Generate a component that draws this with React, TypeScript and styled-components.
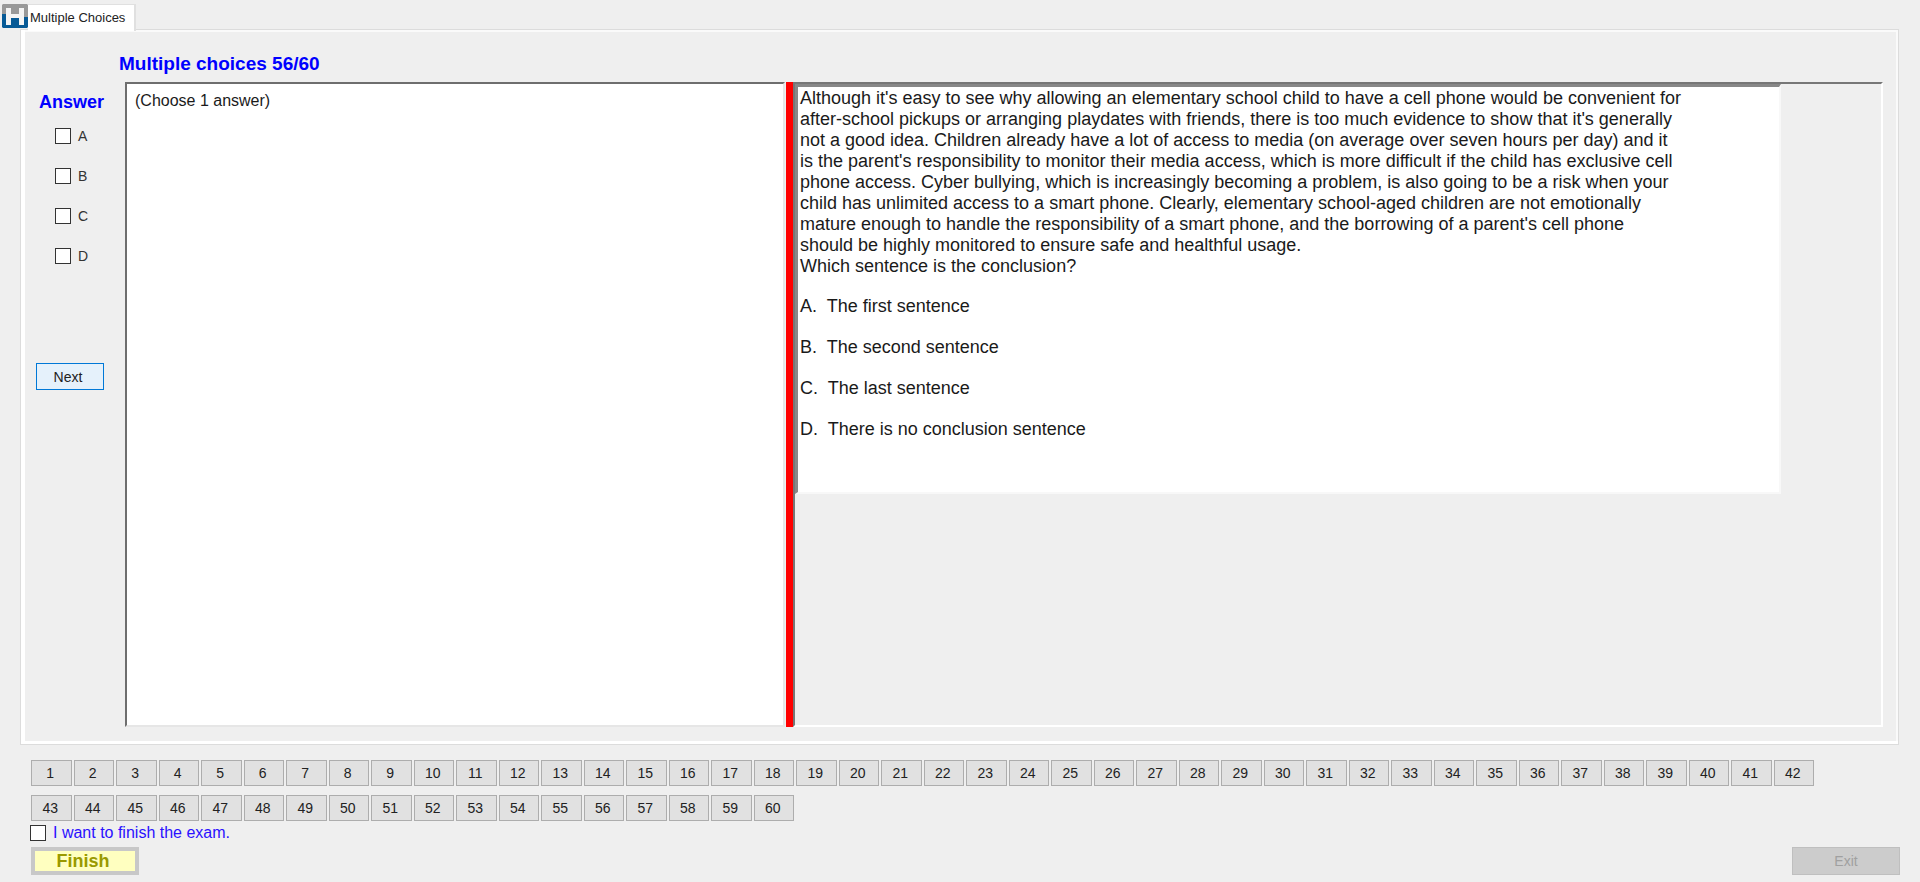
import React, { useState } from "react";
import styled, { createGlobalStyle } from "styled-components";

const GlobalStyle = createGlobalStyle`
  * { box-sizing: border-box; }
  body {
    margin: 0;
    background: #efefef;
    color: #1a1a1a;
    font-family: "Liberation Sans", Arial, sans-serif;
    font-size: 14px;
  }
  button { font-family: inherit; padding: 0; cursor: pointer; }
`;

const Page = styled.div`
  display: flex;
  flex-direction: column;
  min-height: 100vh;
`;

const Header = styled.header`
  display: flex;
  align-items: flex-start;
  padding: 4px 0 0 2px;
`;

const Logo = styled.svg`
  display: block;
  width: 26px;
  height: 24px;
`;

const Tab = styled.button`
  position: relative;
  height: 27px;
  margin-bottom: -2px;
  padding: 0 9px 1px 2px;
  border: 2px solid #e0e0e0;
  border-width: 1px 2px 0 0;
  background: #fff;
  color: #222;
  font-size: 13px;
`;

const TabPanel = styled.main`
  flex: 1;
  display: grid;
  grid-template-columns: 100px minmax(0, 1fr);
  grid-template-rows: 52px minmax(0, 1fr);
  margin: 0 21px 0 20px;
  padding: 0 15px 17px 4px;
  border: 1px solid #dcdcdc;
  box-shadow: inset 4px -3px 0 #fff, inset -2px 2px 0 #fafafa;
`;

const Title = styled.h1`
  grid-column: 2;
  margin: 0;
  padding-top: 22px;
  margin-left: -6px;
  color: #0000ff;
  font-size: 19px;
  line-height: 24px;
`;

const AnswerColumn = styled.form`
  display: flex;
  flex-direction: column;
  align-items: flex-start;
  padding: 10px 0 0 11px;
`;

const AnswerTitle = styled.h2`
  margin: 0 0 14px 3px;
  color: #0000ff;
  font-size: 18px;
  line-height: 20px;
`;

const Choices = styled.div`
  display: flex;
  flex-direction: column;
  gap: 20px;
  padding-left: 19px;
`;

const CheckLabel = styled.label<{ $accent?: boolean }>`
  display: flex;
  align-items: center;
  gap: 7px;
  height: 20px;
  color: ${(p) => (p.$accent ? "#2a10ff" : "#333")};
  font-size: ${(p) => (p.$accent ? 16 : 14)}px;
`;

const Checkbox = styled.input`
  appearance: none;
  width: 16px;
  height: 16px;
  margin: 0;
  border: 1px solid #333;
  background: #fff;
  &:checked { background: #333; box-shadow: inset 0 0 0 3px #fff; }
`;

const NextButton = styled.button`
  width: 68px;
  height: 27px;
  margin-top: 97px;
  padding-right: 4px;
  border: 1px solid #0078d7;
  background: #e5f1fb;
  color: #222;
  font-size: 14px;
`;

const Workspace = styled.div`
  display: grid;
  grid-template-columns: 661px 7px minmax(0, 1fr);
`;

const PromptBox = styled.section`
  margin-right: 1px;
  padding: 8px;
  border: 2px solid #6e6e6e;
  border-right-color: #e6e6e6;
  border-bottom-color: #e6e6e6;
  background: #fff;
  font-size: 16px;
  line-height: 18px;
`;

const Splitter = styled.div`
  background: #ff0000;
`;

const QuestionPane = styled.section`
  padding-right: 100px;
  border: 2px solid #777;
  border-right-color: #fff;
  border-bottom-color: #fff;
`;

const Sheet = styled.article`
  min-height: 410px;
  padding: 1px 2px;
  border: 3px solid #888;
  border-right: 2px solid #f8f8f8;
  border-bottom: 2px solid #f8f8f8;
  background: #fff;
  font-size: 18px;
  line-height: 21px;
  p { margin: 0; }
`;

const Passage = styled.p`
  white-space: pre-line;
`;

const Options = styled.ol`
  display: flex;
  flex-direction: column;
  gap: 20px;
  margin: 19px 0 0;
  padding: 0;
  list-style: none;
  li { white-space: pre; }
`;

const Footer = styled.footer`
  padding: 15px 20px 7px 31px;
`;

const QuestionGrid = styled.nav`
  display: grid;
  grid-template-columns: repeat(42, minmax(0, 1fr));
  gap: 9px 2px;
  margin-right: 86px;
`;

const QuestionButton = styled.button`
  height: 26px;
  padding-right: 2px;
  border: 1px solid #adadad;
  background: #e1e1e1;
  color: #222;
  font-size: 14px;
`;

const FinishRow = styled.div`
  display: flex;
  margin-left: -1px;
  padding: 2px 0 4px;
`;

const Actions = styled.div`
  display: flex;
  justify-content: space-between;
`;

const FinishButton = styled.button`
  width: 108px;
  height: 28px;
  padding-right: 4px;
  border: 4px solid #c8c8c8;
  background: #ffffc0;
  color: #999900;
  font-size: 18px;
  font-weight: bold;
  line-height: 20px;
`;

const ExitButton = styled.button`
  width: 108px;
  height: 28px;
  border: 1px solid #bfbfbf;
  background: #cccccc;
  color: #a0a0a0;
  font-size: 14px;
`;

const passage = `Although it's easy to see why allowing an elementary school child to have a cell phone would be convenient for
after-school pickups or arranging playdates with friends, there is too much evidence to show that it's generally
not a good idea. Children already have a lot of access to media (on average over seven hours per day) and it
is the parent's responsibility to monitor their media access, which is more difficult if the child has exclusive cell
phone access. Cyber bullying, which is increasingly becoming a problem, is also going to be a risk when your
child has unlimited access to a smart phone. Clearly, elementary school-aged children are not emotionally
mature enough to handle the responsibility of a smart phone, and the borrowing of a parent's cell phone
should be highly monitored to ensure safe and healthful usage.`;

const options = [
  "A.  The first sentence",
  "B.  The second sentence",
  "C.  The last sentence",
  "D.  There is no conclusion sentence",
];

const questionNumbers = Array.from({ length: 60 }, (_, i) => i + 1);

export default function App() {
  const [finish, setFinish] = useState(false);
  return (
    <Page>
      <GlobalStyle />
      <Header>
        <Logo viewBox="0 0 26 24" aria-hidden="true">
          <path d="M1 0h24l1 1v13H0V1z" fill="#999" />
          <path d="M0 10h4v4h5v-1h8v1h5v-1h4v10l-1 1H1l-1-1z" fill="#075a96" />
          <path d="M4 4h5v6h8V4h5v17h-5v-7H9v7H4z" fill="#f4f4f4" />
        </Logo>
        <Tab type="button">Multiple Choices</Tab>
      </Header>
      <TabPanel>
        <Title>Multiple choices 56/60</Title>
        <AnswerColumn>
          <AnswerTitle>Answer</AnswerTitle>
          <Choices>
            {["A", "B", "C", "D"].map((letter) => (
              <CheckLabel key={letter}>
                <Checkbox type="checkbox" name="answer" value={letter} />
                {letter}
              </CheckLabel>
            ))}
          </Choices>
          <NextButton type="button">Next</NextButton>
        </AnswerColumn>
        <Workspace>
          <PromptBox>(Choose 1 answer)</PromptBox>
          <Splitter />
          <QuestionPane>
            <Sheet>
              <Passage>{passage}</Passage>
              <p>Which sentence is the conclusion?</p>
              <Options>
                {options.map((option) => (
                  <li key={option}>{option}</li>
                ))}
              </Options>
            </Sheet>
          </QuestionPane>
        </Workspace>
      </TabPanel>
      <Footer>
        <QuestionGrid>
          {questionNumbers.map((n) => (
            <QuestionButton key={n} type="button">{n}</QuestionButton>
          ))}
        </QuestionGrid>
        <FinishRow>
          <CheckLabel $accent>
            <Checkbox
              type="checkbox"
              checked={finish}
              onChange={(e) => setFinish(e.target.checked)}
            />
            I want to finish the exam.
          </CheckLabel>
        </FinishRow>
        <Actions>
          <FinishButton type="button">Finish</FinishButton>
          <ExitButton type="button" disabled>Exit</ExitButton>
        </Actions>
      </Footer>
    </Page>
  );
}
